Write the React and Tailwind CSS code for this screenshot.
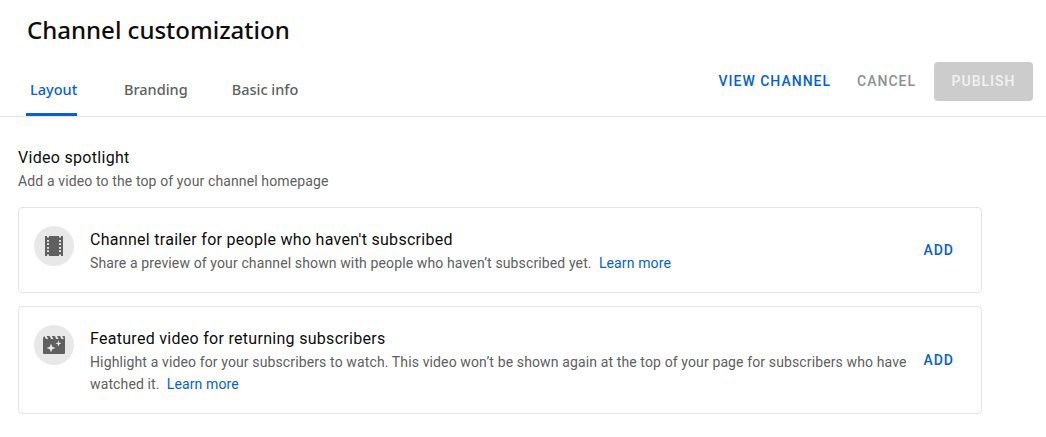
const roboto = { fontFamily: 'Roboto, sans-serif' };
const display = { fontFamily: '"Noto Sans", sans-serif' };

function Film() {
  return (
    <svg viewBox="0 0 24 24" className="w-6 h-6" fill="#606060">
      <path
        fillRule="evenodd"
        d="M3 2h2v1.500h2V2h10v1.500h2V2h2v20h-2v-1.500h-2V22H7v-1.500H5V22H3V2zm2 4v1.800h2V6H5zm0 3.300v1.800h2V9.300H5zm0 3.600v1.800h2v-1.800H5zm0 3.300V18h2v-1.800H5zM17 6v1.800h2V6h-2zm0 3.300v1.800h2V9.300h-2zm0 3.600v1.800h2v-1.800h-2zm0 3.300V18h2v-1.800h-2z"
      />
    </svg>
  );
}

function Clapper() {
  return (
    <svg viewBox="0 0 24 24" className="w-6 h-6" fill="#606060">
      <path
        fillRule="evenodd"
        d="M1 5.500c0-1 .6-2 1.500-2.300L4 6h2.200L4.600 3h3l1.600 3h2.200L9.800 3h3l1.600 3h2.200L15 3h3l1.600 3h2.200L20.300 3H22a1 1 0 0 1 1 1v16a1 1 0 0 1-1 1H2a1 1 0 0 1-1-1V5.500zM9 10.500l-1.200 3.300L4.500 15l3.300 1.200L9 19.500l1.200-3.300L13.500 15l-3.300-1.200L9 10.500zM16.500 7.500l-.8 2.200-2.200.8 2.200.8.8 2.200.8-2.200 2.200-.8-2.200-.8-.8-2.200z"
      />
    </svg>
  );
}

function Card({ icon, title, children, h, mb }) {
  return (
    <div className={`border border-[#e5e5e5] rounded flex items-center justify-between ${h} ${mb}`}>
      <div className="flex self-start pl-[15px] pt-[18px] min-w-0">
        <div className="w-10 h-10 rounded-full bg-[#e8e8e8] flex items-center justify-center shrink-0">{icon}</div>
        <div className="ml-4 pt-[4px] w-[822px]">
          <div className="text-[16px] leading-[20px] font-normal tracking-[0.29px] text-[#0d0d0d]">{title}</div>
          <div className="text-[14px] leading-[22px] tracking-[0.125px] text-[#606060] mt-[2px]">{children}</div>
        </div>
      </div>
      <button className="text-[14px] font-medium text-[#065fd4] tracking-[1px] mr-[27px]">ADD</button>
    </div>
  );
}

export default function App() {
  return (
    <div className="w-[1046px] h-[437px] bg-white overflow-hidden" style={roboto}>
      <header className="border-b border-[#e5e5e5] h-[117px] flex flex-col">
        <h1 className="text-[24px] leading-[32px] font-medium text-[#0d0d0d] pl-[27px] pt-[14px] h-[46px] box-content" style={display}>Channel customization</h1>
        <div className="flex-1 flex items-end justify-between">
          <nav className="flex pl-[26px] text-[14.5px] font-medium" style={display}>
            <div className="h-[41px] w-[51px] pl-[4px] leading-[28px] text-[#065fd4] border-b-[3px] border-[#065fd4]">Layout</div>
            <div className="ml-[47px] leading-[28px] h-[41px] text-[#606060]">Branding</div>
            <div className="ml-[44px] leading-[28px] h-[41px] text-[#606060]">Basic info</div>
          </nav>
          <div className="flex items-center pr-[13px] pb-[15px] text-[14px] font-medium tracking-[1px]">
            <span className="text-[#065fd4]">VIEW CHANNEL</span>
            <span className="ml-[26px] text-[#909090]">CANCEL</span>
            <span className="ml-[18px] w-[99px] h-[39px] bg-[#cccccc] text-[#f2f2f2] flex items-center justify-center rounded-sm">PUBLISH</span>
          </div>
        </div>
      </header>
      <main className="pl-[18px] pr-[64px] pt-[30px]">
        <div className="text-[16px] leading-[22px] tracking-[0.3px] text-[#0d0d0d] font-normal">Video spotlight</div>
        <div className="text-[14px] leading-[20px] tracking-[0.125px] text-[#606060] mt-[2px] mb-[16px]">Add a video to the top of your channel homepage</div>
        <Card icon={<Film />} title="Channel trailer for people who haven't subscribed" h="h-[86px]" mb="mb-[13px]">
          Share a preview of your channel shown with people who haven’t subscribed yet.&nbsp; <span className="text-[#065fd4]">Learn more</span>
        </Card>
        <Card icon={<Clapper />} title="Featured video for returning subscribers" h="h-[108px]">
          Highlight a video for your subscribers to watch. This video won’t be shown again at the top of your page for subscribers who have watched it.&nbsp; <span className="text-[#065fd4]">Learn more</span>
        </Card>
      </main>
    </div>
  );
}
